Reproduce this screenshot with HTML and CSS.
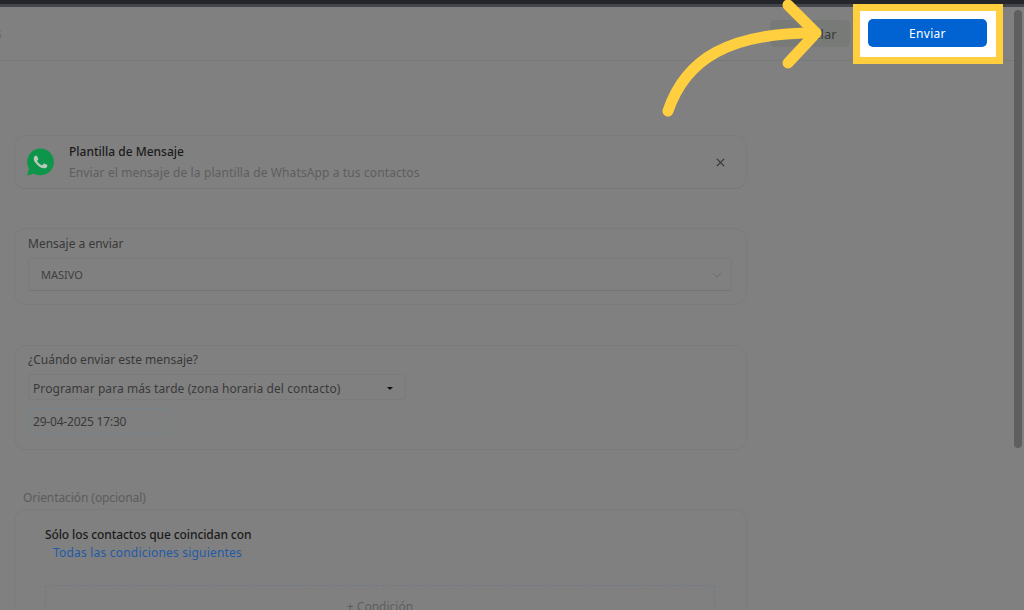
FILE: index.html
```html
<!DOCTYPE html>
<html lang="es">
<head>
    <meta charset="UTF-8">
    <title>Plantilla de Mensaje</title>
    <link rel="stylesheet" href="styles.css">
</head>
<body>
    <div class="top-strip"></div>

    <header class="top-header">
        <span class="crumb-end">s</span>
        <button class="btn-cancel">Cancelar</button>
    </header>

    <main class="form-col">
        <section class="card card-template">
            <svg class="wa-icon" viewBox="0 0 24 24">
                <path class="wa-bubble" d="M12.05 0C5.5 0 .16 5.34.16 11.89c0 2.1.55 4.14 1.59 5.95L.06 24l6.3-1.65a11.88 11.88 0 0 0 5.69 1.45c6.55 0 11.89-5.34 11.89-11.9C23.94 5.34 18.6 0 12.05 0Z"/>
                <path class="wa-phone" d="M17.47 14.38c-.3-.15-1.76-.87-2.03-.97-.27-.1-.47-.15-.67.15-.2.3-.77.97-.94 1.16-.17.2-.35.22-.64.08-.3-.15-1.26-.46-2.39-1.48-.88-.79-1.48-1.76-1.65-2.06-.17-.3-.02-.46.13-.61.13-.13.3-.35.45-.52.15-.17.2-.3.3-.5.1-.2.05-.37-.03-.52-.07-.15-.67-1.61-.92-2.21-.24-.58-.49-.5-.67-.51h-.57c-.2 0-.52.07-.79.37-.27.3-1.04 1.02-1.04 2.48 0 1.46 1.07 2.88 1.21 3.07.15.2 2.1 3.2 5.08 4.49.71.31 1.26.49 1.69.63.71.23 1.36.19 1.87.12.57-.09 1.76-.72 2.01-1.41.25-.7.25-1.29.17-1.41-.07-.13-.27-.2-.57-.35Z"/>
            </svg>
            <div class="template-text">
                <h3>Plantilla de Mensaje</h3>
                <p>Enviar el mensaje de la plantilla de WhatsApp a tus contactos</p>
            </div>
            <svg class="close-icon" viewBox="0 0 10 10">
                <path d="M1 1l8 8M9 1l-8 8"/>
            </svg>
        </section>

        <section class="card card-message">
            <label class="field-label">Mensaje a enviar</label>
            <div class="select-box">
                <span>MASIVO</span>
                <svg class="chevron" viewBox="0 0 10 6">
                    <path d="M1 1l4 4 4-4"/>
                </svg>
            </div>
        </section>

        <section class="card card-when">
            <label class="field-label">¿Cuándo enviar este mensaje?</label>
            <div class="when-select">
                <span>Programar para más tarde (zona horaria del contacto)</span>
                <i class="caret"></i>
            </div>
            <div class="date-input">29-04-2025 17:30</div>
        </section>

        <h4 class="section-title">Orientación (opcional)</h4>
        <section class="card card-target">
            <p class="match-title">Sólo los contactos que coincidan con</p>
            <a class="match-link">Todas las condiciones siguientes</a>
            <div class="condition-box">+ Condición</div>
        </section>
    </main>

    <div class="scroll-thumb"></div>

    <!-- resaltado del tutorial -->
    <div class="highlight">
        <button class="btn-send">Enviar</button>
    </div>
    <svg class="arrow" viewBox="0 0 1024 120">
        <path d="M668 111C686 58 730 33 814 33"/>
        <path d="M788 5l28 28-28 30"/>
    </svg>
</body>
</html>
```

FILE: styles.css
```css
* {
    margin: 0;
    padding: 0;
    box-sizing: border-box;
    font-family: "Noto Sans", "Open Sans", sans-serif;
}

html, body {
    height: 610px;
    overflow: hidden;
}

body {
    background-color: #808080;
    color: #3a3a3a;
    font-size: 12px;
}

.top-strip {
    height: 7px;
    background: linear-gradient(#24262c 0 4px, #45454c 4px);
}

.top-header {
    height: 54px;
    display: flex;
    justify-content: space-between;
    align-items: center;
    padding-right: 174px;
    border-bottom: 1px solid #767a78;
}

.crumb-end {
    margin-left: -4px;
    color: #5d6b78;
}

.btn-cancel {
    width: 80px;
    height: 27px;
    background-color: #777a77;
    color: #3a3a3a;
    border: none;
    border-radius: 5px;
    font-size: 13px;
}

/* Columna del formulario */
.form-col {
    width: 733px;
    margin-left: 14px;
    padding-top: 74px;
}

.card {
    border: 1px solid #7b7b7b;
    border-radius: 12px;
}

.card-template {
    height: 54px;
    display: flex;
    align-items: center;
    padding: 0 21px 0 12px;
    margin-bottom: 39px;
    border-bottom-color: #777;
}

.wa-icon {
    width: 27px;
    height: 28px;
    margin-right: 15px;
    flex: none;
}

.wa-bubble {
    fill: #0d9549;
}

.wa-phone {
    fill: #b9c9bf;
}

.template-text {
    flex: 1;
}

.template-text h3 {
    font-size: 12px;
    font-weight: 500;
    color: #1b1b1b;
    line-height: 18px;
    margin-bottom: 3px;
}

.template-text p {
    font-size: 12px;
    letter-spacing: 0.115px;
    color: #5e5e5e;
    line-height: 18px;
}

.close-icon {
    width: 9px;
    height: 9px;
    fill: none;
    stroke: #333;
    stroke-width: 1.3;
}

.card-message {
    height: 77px;
    padding: 7px 14px 0 13px;
    margin-bottom: 40px;
}

.field-label {
    display: block;
    font-size: 12px;
    line-height: 16px;
    color: #383838;
}

.select-box {
    height: 33px;
    margin-top: 6px;
    padding: 0 9px 0 12px;
    display: flex;
    justify-content: space-between;
    align-items: center;
    border: 1px solid #7b7b7b;
    border-bottom-color: #747474;
    border-radius: 4px;
    font-size: 11px;
    color: #3f3f3f;
}

.chevron {
    width: 10px;
    height: 6px;
    fill: none;
    stroke: #666a72;
    stroke-width: 1;
}

.card-when {
    height: 105px;
    padding: 6px 0 0 13px;
    margin-bottom: 40px;
}

.when-select {
    width: 378px;
    height: 26px;
    margin-top: 6px;
    padding: 2px 12px 0 4px;
    display: flex;
    justify-content: space-between;
    align-items: center;
    border: 1px solid #7b7b7b;
    border-radius: 3px;
    letter-spacing: 0.08px;
    color: #3a3a3a;
}

.caret {
    width: 0;
    height: 0;
    border-left: 3px solid transparent;
    border-right: 3px solid transparent;
    border-top: 3px solid #111;
}

.date-input {
    width: 141px;
    height: 26px;
    margin-top: 8px;
    padding-left: 4px;
    line-height: 26px;
    border: 1px solid #76848c;
    border-radius: 3px;
    letter-spacing: -0.2px;
    color: #3a3a3a;
}

.section-title {
    margin-left: 9px;
    font-size: 12px;
    font-weight: 400;
    line-height: 16px;
    color: #5c5c5c;
    margin-bottom: 3px;
    letter-spacing: -0.08px;
}

.card-target {
    height: 200px;
    padding: 17px 31px 0 30px;
}

.match-title {
    font-weight: 500;
    color: #1b1b1b;
    line-height: 16px;
    letter-spacing: -0.1px;
}

.match-link {
    display: block;
    margin: 2px 0 0 8px;
    line-height: 16px;
    letter-spacing: 0.2px;
    color: #1f5aa8;
}

.condition-box {
    height: 60px;
    margin-top: 24px;
    padding-top: 12px;
    border: 1px dashed #6f7a84;
    text-align: center;
    color: #5e5e5e;
}

.scroll-thumb {
    position: absolute;
    top: 10px;
    left: 1014px;
    width: 8px;
    height: 438px;
    background-color: #5f5f5f;
    border-radius: 4px;
}

.highlight {
    position: absolute;
    top: 4px;
    left: 853px;
    width: 150px;
    height: 60px;
    padding: 8px 9px 9px 8px;
    background-color: #fff;
    border: 7px solid #ffcf40;
}

.btn-send {
    display: block;
    width: 119px;
    height: 28px;
    background-color: #0063d1;
    color: white;
    border: none;
    border-radius: 5px;
    font-size: 12px;
    letter-spacing: 0.3px;
}

.arrow {
    position: absolute;
    top: 0;
    left: 0;
    width: 1024px;
    height: 120px;
    fill: none;
    stroke: #ffcf40;
    stroke-width: 11;
    stroke-linecap: round;
    stroke-linejoin: round;
}
```
